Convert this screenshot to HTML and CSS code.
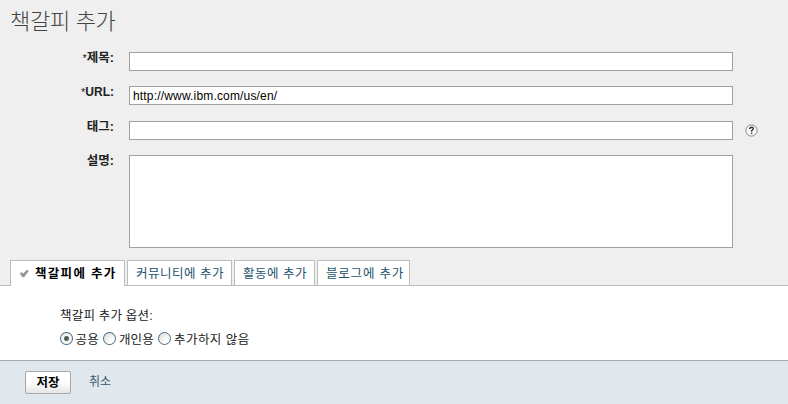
FILE: index.html
```html
<!DOCTYPE html>
<html lang="ko">
<head>
<meta charset="utf-8">
<title>책갈피 추가</title>
<link rel="stylesheet" href="styles.css">
</head>
<body>
<form class="dialog">
  <header class="head"><h1 class="title">책갈피 추가</h1></header>
  <section class="fields">
    <label class="name" for="title"><span class="req">*</span><span class="t-title">제목:</span></label>
    <input class="box" id="title" type="text">
    <span></span>
    <label class="name" for="url"><span class="req">*</span><span class="t-url">URL:</span></label>
    <input class="box" id="url" type="text" value="http://www.ibm.com/us/en/">
    <span></span>
    <label class="name" for="tags">태그:</label>
    <input class="box tags" id="tags" type="text">
    <svg class="help" viewBox="0 0 13 13"><circle cx="6.5" cy="6.5" r="5.6" fill="#f8f8f8" stroke="#858585"/><path d="M4.7 5.1V4.4Q5 3.3 6.6 3.3Q8.3 3.4 8.3 4.8Q8.2 5.8 6.6 6.8V7.7M6.6 8.8V10" fill="none" stroke="#303030" stroke-width="1.4"/></svg>
    <label class="name" for="desc">설명:</label>
    <textarea class="box area" id="desc"></textarea>
    <span></span>
  </section>
  <nav class="tabs">
    <a class="tab active"><svg class="check" viewBox="0 0 10 9"><path d="M1 4.1L3.4 3.8L4.3 5L8 .8L9.4 2L5.2 7.8L3.3 7.9Z" fill="#87918c" stroke="#a4aca8" stroke-width=".7"/></svg><span class="txt">책갈피에 추가</span></a>
    <a class="tab community"><span class="txt">커뮤니티에 추가</span></a>
    <a class="tab activity"><span class="txt">활동에 추가</span></a>
    <a class="tab blog"><span class="txt">블로그에 추가</span></a>
  </nav>
  <section class="panel">
    <div class="caption">책갈피 추가 옵션:</div>
    <div class="options">
      <label class="opt o1"><input class="radio" type="radio" name="scope" checked><span>공용</span></label>
      <label class="opt o2"><input class="radio" type="radio" name="scope"><span>개인용</span></label>
      <label class="opt o3"><input class="radio" type="radio" name="scope"><span>추가하지 않음</span></label>
    </div>
  </section>
  <footer class="foot">
    <button class="save" type="button">저장</button>
    <a class="cancel">취소</a>
  </footer>
</form>
</body>
</html>
```

FILE: styles.css
```css
* { box-sizing: border-box; }
body {
  margin: 0;
  background: #efefef;
  color: #222;
  font: 12.5px/16px "Liberation Sans", "Noto Sans CJK KR", sans-serif;
}
.dialog { display: flex; flex-direction: column; height: 404px; overflow: hidden; }
.head { height: 52px; padding: 5px 0 0 10px; }
.title { margin: 0; font-size: 22px; line-height: 28px; font-weight: 300; letter-spacing: -.3px; color: #444; font-family: "Noto Sans CJK KR", sans-serif; }
.fields {
  display: grid;
  grid-template-columns: 114px 604px 13px;
  grid-template-rows: 34px 35px 34px 105px;
  column-gap: 15px;
  height: 208px;
}
.fields .help { margin-left: -3px; }
.name { justify-self: end; height: 16px; margin-top: -2px; font-weight: 700; white-space: nowrap; }
.req { font-size: 11px; font-weight: 400; }
.t-url { font-size: 12px; }
.box {
  width: 604px; height: 19px; margin: 0; padding: 1px 3px 0;
  border: 1px solid #a0a0a0; border-radius: 0; background: #fff;
  color: #000; font: 12px/16px "Liberation Sans", sans-serif; letter-spacing: .17px; outline: none;
}
.area { height: 93px; resize: none; }
.help { width: 13px; height: 13px; margin-top: 3px; }
.tabs { display: flex; gap: 2px; height: 26px; padding-left: 10px; border-bottom: 1px solid #bcbcbc; }
.tab {
  display: flex; align-items: center; height: 25px;
  border: 1px solid #bcbcbc; border-bottom: 0; background: #fff;
  padding: 1px 0 0 8px; color: #245370; white-space: nowrap; letter-spacing: .5px;
}
.active { width: 115px; height: 26px; padding-bottom: 1px; color: #000; font-weight: 700; letter-spacing: 1.3px; }
.community { width: 105px; }
.activity { width: 81px; }
.blog { width: 93px; letter-spacing: .8px; }
.check { width: 10px; height: 9px; margin-right: 6px; }
.panel { height: 74px; padding: 22px 0 0 60px; background: #fff; letter-spacing: .2px; }
.caption { height: 24px; }
.options { display: flex; gap: 4px; }
.opt { display: flex; gap: 3px; white-space: nowrap; }
.o1 { width: 39px; }
.o2 { width: 51px; }
.o3 { letter-spacing: .45px; }
.radio {
  appearance: none; width: 13px; height: 13px; margin: 0;
  border: 1px solid #456b83; border-radius: 50%;
  background: linear-gradient(135deg, #dcdcd8, #fff 75%);
}
.radio:checked { background: radial-gradient(circle, #4c5f59 0 2px, #f4f4f2 3px); }
.foot { display: flex; flex: 1; align-items: flex-start; gap: 18px; padding: 10px 0 0 25px; border-top: 1px solid #a5abaf; background: #e0e8ee; }
.save {
  width: 46px; height: 23px; padding: 1px 0 0; border: 1px solid #a8a8a8; border-radius: 2px;
  background: linear-gradient(#fff 45%, #e6e6e6); color: #000;
  font: 700 12.5px/20px "Liberation Sans", "Noto Sans CJK KR", sans-serif;
}
.cancel { margin-top: 3px; color: #3c5868; font-size: 12px; }
```
